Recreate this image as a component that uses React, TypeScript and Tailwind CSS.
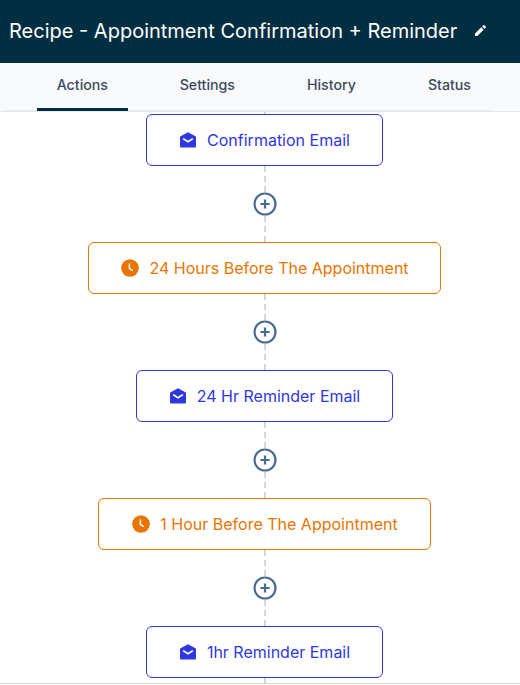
import React from "react";

function MailOpen() {
  return (
    <svg width="16" height="16" viewBox="0 0 16 16" className="shrink-0">
      <path
        fill="#2f38e0"
        fillRule="evenodd"
        d="M8 0.2 L15.4 4.3 Q16 4.7 16 5.4 V14.2 Q16 15.6 14.6 15.6 H1.4 Q0 15.6 0 14.2 V5.4 Q0 4.7 0.6 4.3 Z M3.7 6 L2.6 7.3 L8 10.8 L13.4 7.3 L12.3 6 L8 8.7 Z"
      />
    </svg>
  );
}

function Clock() {
  return (
    <svg width="18" height="18" viewBox="0 0 18 18" className="shrink-0">
      <circle cx="9" cy="9" r="8.8" fill="#e87500" />
      <path d="M8.4 4.4 V9.6 L11.8 11.6" fill="none" stroke="#fff" strokeWidth="1.5" />
    </svg>
  );
}

function DashLine({ height }: { height: number }) {
  return (
    <svg width="2" height={height} viewBox={`0 0 2 ${height}`} className="block shrink-0">
      <line x1="1" y1="0" x2="1" y2={height} stroke="#cfd6de" strokeWidth="2" strokeDasharray="6 4" />
    </svg>
  );
}

function Connector() {
  return (
    <div className="relative flex h-[76px] w-[24px] shrink-0 flex-col items-center justify-center">
      <div className="absolute inset-y-0 left-[11px]">
        <DashLine height={76} />
      </div>
      <svg width="24" height="24" viewBox="0 0 24 24" className="relative">
        <circle cx="12" cy="12" r="10.5" fill="#fff" stroke="#4a6a94" strokeWidth="2.2" />
        <path d="M12 7.5 V16.5 M7.5 12 H16.5" stroke="#4a6a94" strokeWidth="2.2" />
      </svg>
    </div>
  );
}

function Node({ kind, label, width }: { kind: "mail" | "time"; label: string; width: string }) {
  const mail = kind === "mail";
  return (
    <div
      className={`flex h-[52px] shrink-0 items-center justify-center rounded-[6px] border bg-white pl-[1px] text-[16px] ${width} ${
        mail ? "gap-[11px] border-[#2f38e0] text-[#2f38e0]" : "gap-[10px] border-[#e87500] text-[#e87500]"
      }`}
    >
      {mail ? <MailOpen /> : <Clock />}
      <span>{label}</span>
    </div>
  );
}

export default function App() {
  return (
    <div className="h-[685px] w-[520px] overflow-hidden bg-white font-['Inter',sans-serif]">
      <header className="flex h-[63px] items-center bg-[#012e40] pb-[2px] pl-[9px] text-white">
        <h1 className="text-[20px] leading-none font-normal">Recipe - Appointment Confirmation + Reminder</h1>
        <svg width="13" height="13" viewBox="0 0 14 14" className="ml-[17px]">
          <path fill="#fff" d="M1 10.4 V13 H3.6 L10.4 6.2 L7.8 3.6 Z M12.6 4 Q13.2 3.4 12.6 2.8 L11.2 1.4 Q10.6 0.8 10 1.4 L8.8 2.6 L11.4 5.2 Z" />
        </svg>
      </header>
      <nav className="border-b border-[#e5e7eb] bg-[#f9fafb]">
        <div className="ml-[5px] flex h-[48px] w-[486px] gap-8 border-b border-[#e5e7eb] pl-[32px] text-[14.2px] font-medium text-[#3c4a60]">
          <div className="flex h-[48px] w-[91px] items-center justify-center border-b-[3px] border-[#012e40] pb-[2px]">Actions</div>
          <div className="flex h-[47px] items-center px-5 pb-[3px]">Settings</div>
          <div className="flex h-[47px] items-center px-5 pb-[3px]">History</div>
          <div className="flex h-[47px] items-center px-5 pb-[3px]">Status</div>
        </div>
      </nav>
      <main className="flex h-[572px] flex-col items-center border-b border-[#d8dbe0] pl-[9px]">
        <DashLine height={2} />
        <Node kind="mail" label="Confirmation Email" width="w-[237px]" />
        <Connector />
        <Node kind="time" label="24 Hours Before The Appointment" width="w-[353px]" />
        <Connector />
        <Node kind="mail" label="24 Hr Reminder Email" width="w-[257px]" />
        <Connector />
        <Node kind="time" label="1 Hour Before The Appointment" width="w-[333px]" />
        <Connector />
        <Node kind="mail" label="1hr Reminder Email" width="w-[237px]" />
        <DashLine height={7} />
      </main>
    </div>
  );
}
